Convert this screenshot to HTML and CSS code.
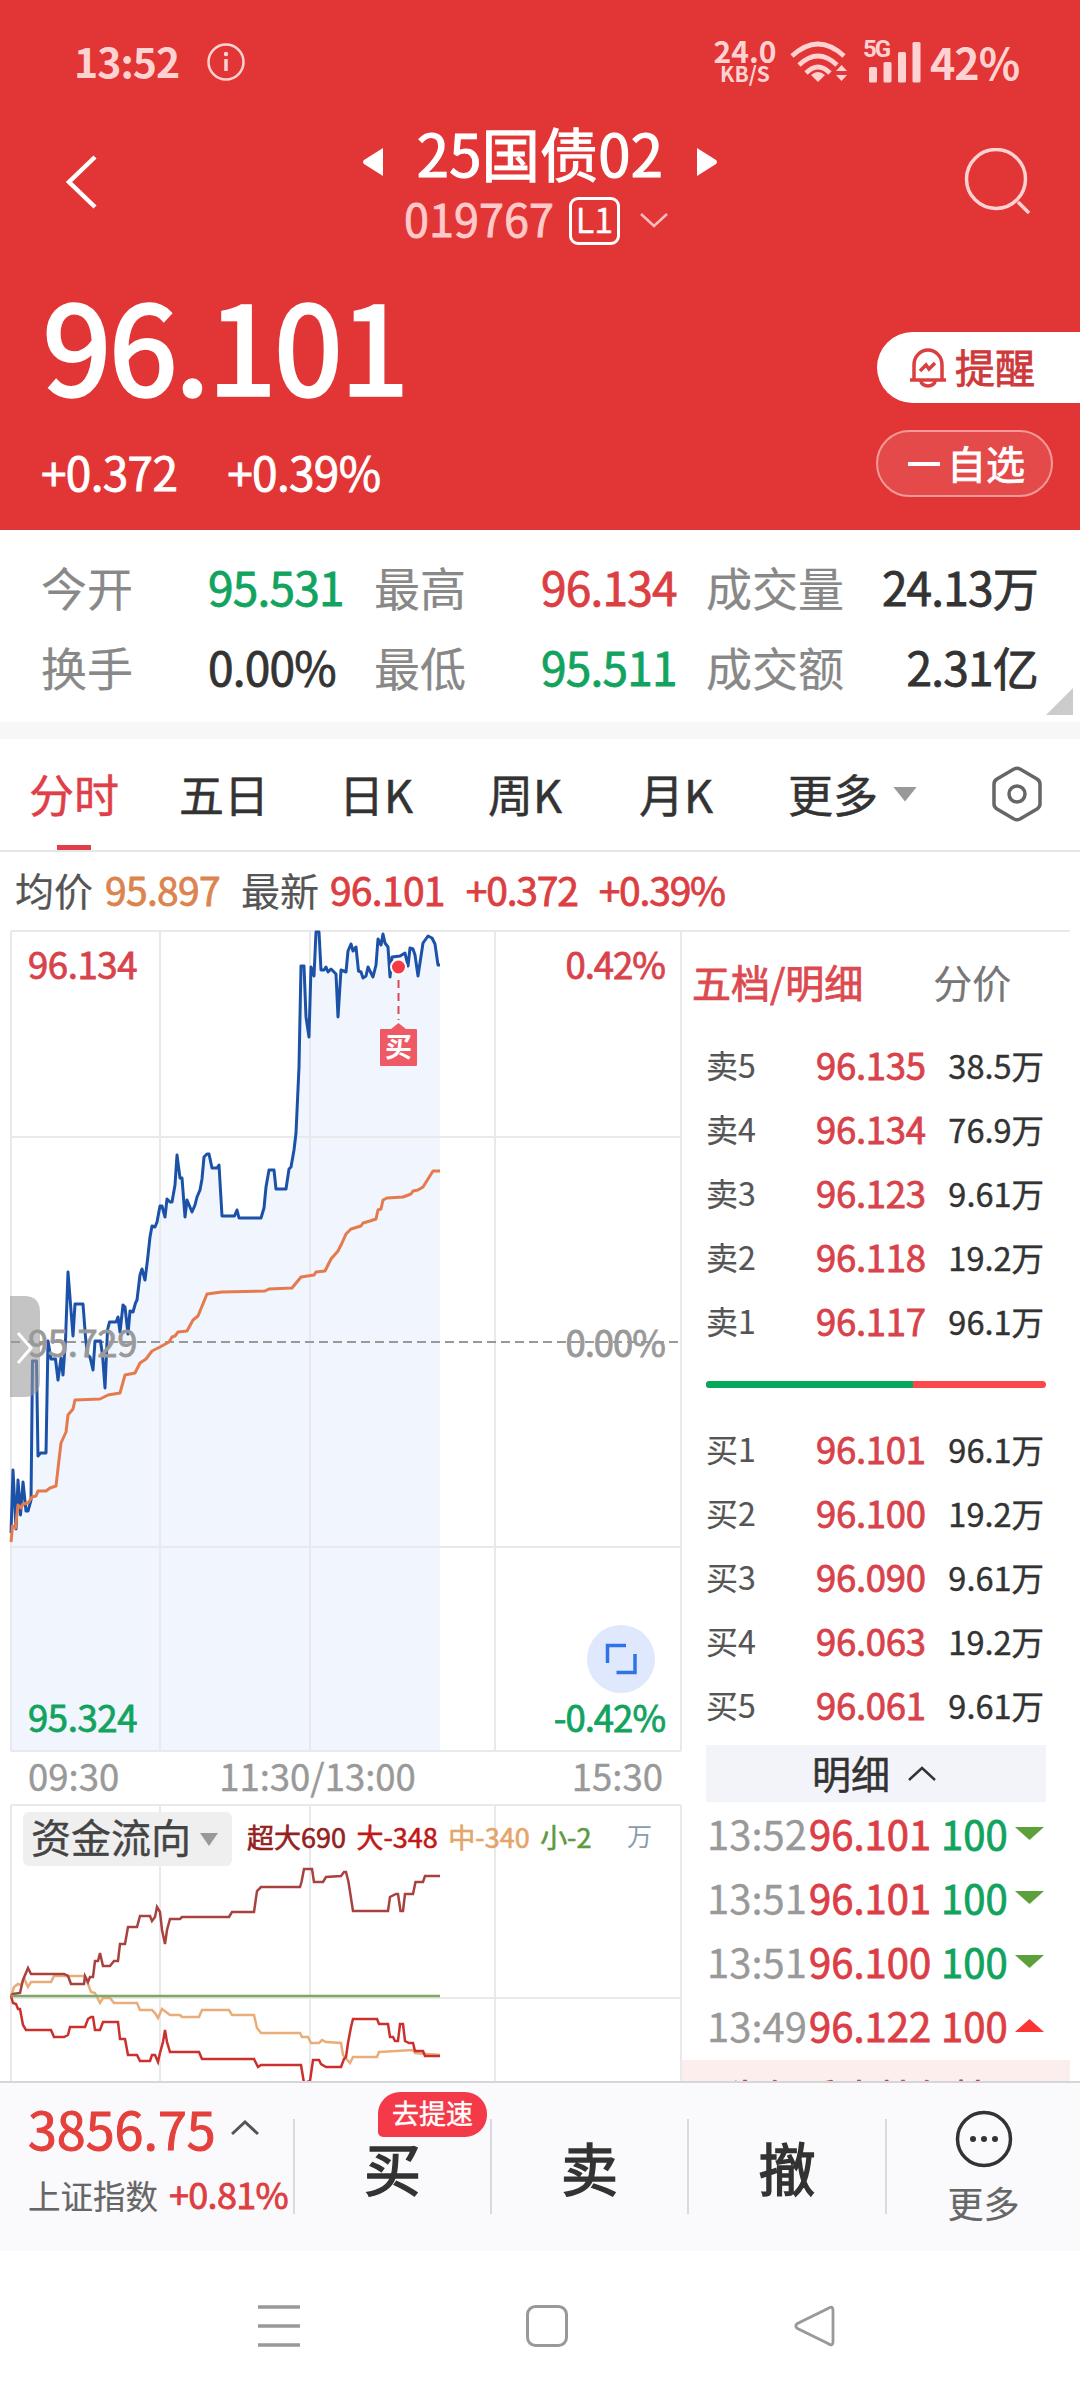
FILE: index.html
```html
<!DOCTYPE html>
<html lang="zh-CN">
<head>
    <meta charset="UTF-8">
    <meta name="viewport" content="width=device-width, initial-scale=1.0">
    <title>25国债02 019767</title>
    <link rel="stylesheet" href="styles.css">
</head>
<body>
    <header class="header">
        <div class="status">
            <span class="clock">13:52</span>
            <svg class="info-icon" width="38" height="38" viewBox="0 0 38 38">
                <circle cx="19" cy="19" r="17.5" fill="none" stroke="#ffd2d2" stroke-width="2.5"/>
                <path d="M19 16V28" stroke="#ffd2d2" stroke-width="3.5"/>
                <circle cx="19" cy="11" r="2.2" fill="#ffd2d2"/>
            </svg>
            <div class="net-speed">
                <span class="speed">24.0</span>
                <span class="unit">KB/S</span>
            </div>
            <svg width="58" height="42" viewBox="791 41 58 42" fill="none" stroke="#ffd2d2" stroke-width="4.6">
                <path d="M793 56Q819 32 845 56"/>
                <path d="M800 65Q819 47 838 65"/>
                <path d="M807 73Q819 61 831 73"/>
                <path d="M812 75Q819 69 826 75L819 82Z" fill="#ffd2d2" stroke="none"/>
                <path d="M837 71L842.500 65L848 71ZM837 75L842.500 81L848 75Z" fill="#ffd2d2" stroke="none"/>
            </svg>
            <div class="signal">
                <span class="net-type">5G</span>
                <svg width="52" height="42" viewBox="870 41 52 42" fill="#ffd2d2">
                    <rect x="870" y="67" width="8" height="15.500" rx="1.500"/>
                    <rect x="884.500" y="62" width="8" height="20.500" rx="1.500"/>
                    <rect x="899" y="52" width="8" height="30.500" rx="1.500"/>
                    <rect x="913.500" y="42" width="8" height="40.500" rx="1.500"/>
                </svg>
            </div>
            <span class="battery">42%</span>
        </div>

        <div class="titlebar">
            <svg class="back" width="34" height="56" viewBox="0 0 34 56">
                <path d="M30 3L4 28L30 53" fill="none" stroke="#fff" stroke-width="4.500"/>
            </svg>
            <div class="title-center">
                <div class="title-line">
                    <svg width="22" height="30" viewBox="0 0 22 30"><path d="M20 1V29L1 17Q-1 15 1 13Z" fill="#fff"/></svg>
                    <h1 class="name">25国债02</h1>
                    <svg width="22" height="30" viewBox="0 0 22 30"><path d="M2 1V29L21 17Q23 15 21 13Z" fill="#fff"/></svg>
                </div>
                <div class="code-line">
                    <span class="code">019767</span>
                    <span class="level">L1</span>
                    <svg class="code-arrow" width="28" height="16" viewBox="0 0 28 16"><path d="M1 1L14 13L27 1" fill="none" stroke="#f9bcbc" stroke-width="2.500"/></svg>
                </div>
            </div>
            <svg class="search" width="68" height="68" viewBox="0 0 68 68" fill="none" stroke="#ffd2d2" stroke-width="3.500">
                <circle cx="32" cy="31" r="29.500"/>
                <path d="M54 54L65 65"/>
            </svg>
        </div>

        <div class="quote">
            <div class="quote-left">
                <div class="price">96.101</div>
                <div class="change"><span>+0.372</span><span>+0.39%</span></div>
            </div>
            <div class="quote-right">
                <div class="remind">
                    <svg width="38" height="40" viewBox="0 0 38 40" fill="none" stroke="#d9403f" stroke-width="3.500">
                        <path d="M5 31V17A14 15 0 0 1 33 17V31"/>
                        <path d="M1 32H37"/>
                        <path d="M12 33A7 5 0 0 0 26 33"/>
                        <path d="M11 23L17 17L20 21L26 15"/>
                    </svg>
                    <span>提醒</span>
                </div>
                <div class="favorite"><i class="minus"></i><span>自选</span></div>
            </div>
        </div>
    </header>

    <section class="stats">
        <span class="stat-label">今开</span><span class="stat-value green">95.531</span>
        <span class="stat-label">最高</span><span class="stat-value red">96.134</span>
        <span class="stat-label">成交量</span><span class="stat-value right">24.13万</span>
        <span class="stat-label">换手</span><span class="stat-value">0.00%</span>
        <span class="stat-label">最低</span><span class="stat-value green">95.511</span>
        <span class="stat-label">成交额</span><span class="stat-value right">2.31亿</span>
        <i class="corner"></i>
    </section>

    <nav class="tabs">
        <span class="tab active">分时</span>
        <span class="tab">五日</span>
        <span class="tab">日K</span>
        <span class="tab">周K</span>
        <span class="tab">月K</span>
        <span class="tab">更多<i class="caret"></i></span>
        <svg class="settings" width="50" height="56" viewBox="0 0 50 56" fill="none" stroke="#666" stroke-width="3.500">
            <path d="M22 3Q25 1.500 28 3L45 13Q48 15 48 18V38Q48 41 45 43L28 53Q25 54.500 22 53L5 43Q2 41 2 38V18Q2 15 5 13Z"/>
            <circle cx="25" cy="28" r="8"/>
        </svg>
    </nav>

    <div class="summary">
        <span class="avg-label">均价</span><span class="avg">95.897</span>
        <span class="last-label">最新</span><span class="last">96.101</span>
        <span class="diff">+0.372</span><span class="diff">+0.39%</span>
    </div>

    <main class="main">
        <div class="charts">
            <svg class="price-chart" width="684" height="823" viewBox="0 930 684 823">
                <path class="area" d="M11 1533L13 1470 16 1529 18 1480 20.500 1515 23 1482 26 1511 28 1511 31 1500 32.500 1361 36.500 1361 38 1456 40.500 1453 46 1453 48 1341 51 1359 55.500 1359 58 1380 61 1358 63 1375 65.500 1340 68 1272 73 1336 75 1304 83 1304 85.500 1337 87.500 1355 90 1357 93 1370 95 1341 100.500 1341 102.500 1355 105 1388 107.500 1330 109.500 1322 116 1322 118 1317 120 1332 123 1305 125 1307 128 1334 130 1311 133 1312 135.500 1303 137 1300 140 1275 142 1269 145 1280 147.500 1260 150 1237 152 1226 155 1227 157 1222 160 1206 162 1206 165 1217 167 1199 170 1202 172 1202 175 1185 177 1155 180 1178 182 1178 185 1217 187 1200 192 1212 195 1205 197 1197 200 1190 202 1179 204 1157 207 1154 209 1154 212 1168 217 1168 219 1165 222 1216 234.500 1216 237 1210 239 1218 261 1218 264 1208 266 1187 269 1170 274 1170 276 1189 286 1189 289 1169 291 1167 294 1150 296 1133 299 1067 301 966 304 966 306 1017 309 1037 311 967 314 976 316 932 319 932 321 970 324 970 326 967 328 972 331 969 336 974 338 1017 341 970 346 972 348 951 351 944 353 951 356 947 358.500 971 361 972 363 978 366 976 368 967 373 977 376 965 378 939 381 945 383 934 385 943 388 947 390 977 392 957 400 956 405 953 408 966 410 948 413 949 415 955 418 976 423 943 428 936 432 938 435 944 438 965 440 965V1750H11Z"/>
                <path class="grid" d="M11 931H684M11 1137H681M11 1547H681M11 1751H681M11 931V1751M160 931V1751M310 931V1751M495 931V1751M681 931V1751"/>
                <path class="prev-close" d="M11 1342H681"/>
                <path class="line-price" d="M11 1533L13 1470 16 1529 18 1480 20.500 1515 23 1482 26 1511 28 1511 31 1500 32.500 1361 36.500 1361 38 1456 40.500 1453 46 1453 48 1341 51 1359 55.500 1359 58 1380 61 1358 63 1375 65.500 1340 68 1272 73 1336 75 1304 83 1304 85.500 1337 87.500 1355 90 1357 93 1370 95 1341 100.500 1341 102.500 1355 105 1388 107.500 1330 109.500 1322 116 1322 118 1317 120 1332 123 1305 125 1307 128 1334 130 1311 133 1312 135.500 1303 137 1300 140 1275 142 1269 145 1280 147.500 1260 150 1237 152 1226 155 1227 157 1222 160 1206 162 1206 165 1217 167 1199 170 1202 172 1202 175 1185 177 1155 180 1178 182 1178 185 1217 187 1200 192 1212 195 1205 197 1197 200 1190 202 1179 204 1157 207 1154 209 1154 212 1168 217 1168 219 1165 222 1216 234.500 1216 237 1210 239 1218 261 1218 264 1208 266 1187 269 1170 274 1170 276 1189 286 1189 289 1169 291 1167 294 1150 296 1133 299 1067 301 966 304 966 306 1017 309 1037 311 967 314 976 316 932 319 932 321 970 324 970 326 967 328 972 331 969 336 974 338 1017 341 970 346 972 348 951 351 944 353 951 356 947 358.500 971 361 972 363 978 366 976 368 967 373 977 376 965 378 939 381 945 383 934 385 943 388 947 390 977 392 957 400 956 405 953 408 966 410 948 413 949 415 955 418 976 423 943 428 936 432 938 435 944 438 965 440 965"/>
                <path class="line-avg" d="M11 1542L12.500 1526 15.500 1528 18 1505 21 1508 23 1504 28 1503 32 1497 36 1496 38 1491 46 1491 50 1488 56 1486 59 1460 61 1443 66 1432 68 1415 73 1409 75 1400 100 1399 108 1395 120 1393 125 1375 135 1373 140 1363 146 1359 152 1351 160 1347 169 1342 172 1337 175 1336 178 1332 187 1331 193 1320 198 1316 207 1294 222 1292 265 1291 269 1289 292 1288 301 1277 314 1275 316 1272 325 1271 331 1259 338 1251 342 1243 346 1234 351 1229 361 1226 363 1223 370 1221 376 1219 378 1210 381 1209 383 1200 387 1198 403 1197 411 1194 413 1191 418 1190 423 1187 433 1171 440 1171"/>
                <text class="axis red-text" x="28" y="979">96.134</text>
                <text class="axis red-text end" x="665" y="979">0.42%</text>
                <text class="axis gray-text" x="28" y="1357">95.729</text>
                <text class="axis gray-text end" x="665" y="1357">0.00%</text>
                <text class="axis green-text" x="28" y="1732">95.324</text>
                <text class="axis green-text end" x="665" y="1732">-0.42%</text>
                <!-- buy marker -->
                <path d="M398.500 980V1020" stroke="#d84a55" stroke-width="2" stroke-dasharray="8 5"/>
                <circle cx="398.500" cy="967" r="7.500" fill="#f53a45" stroke="#fff" stroke-width="2"/>
                <path d="M381 1029H391L398.500 1023L406 1029H416Q417 1029 417 1030V1065Q417 1066 416 1066H381Q380 1066 380 1065V1030Q380 1029 381 1029Z" fill="#ef5966"/>
                <text class="flag" x="398.500" y="1057">买</text>
                <!-- drawer handle -->
                <path d="M10 1296H24Q40 1296 40 1312V1381Q40 1397 24 1397H10Z" fill="#999" fill-opacity=".58"/>
                <path d="M18 1333L31 1348L18 1363" fill="none" stroke="#fff" stroke-width="3"/>
                <!-- fullscreen button -->
                <circle cx="621" cy="1659" r="34" fill="#dfe8fc"/>
                <path d="M607.500 1663V1645.500H626M635 1654V1672.500H616.500" fill="none" stroke="#2f74e6" stroke-width="3.500"/>
            </svg>

            <div class="time-axis"><span>09:30</span><span class="noon">11:30/13:00</span><span>15:30</span></div>

            <div class="flow">
                <svg class="flow-chart" width="684" height="277" viewBox="0 1804 684 277">
                    <path class="grid" d="M11 1805H681M11 1998H681M11 1805V2081M160 1805V2081M310 1805V2081M495 1805V2081M681 1805V2081"/>
                    <path class="flow-line mid" d="M11 1996L14 1987 18 1984 21 1985 24 1978 28 1987 31 1982 51 1982 54 1976 84 1976 88 1984 91 1992 95 1993 100 2003 103 1998 110 1998 114 2003 137 2003 140 2010 152 2010 155 2013 158 2018 162 2009 170 2015 180 2015 182 2017 199 2017 202 2010 229 2010 232 2015 254 2015 257 2028 261 2033 300 2033 302 2037 308 2037 311 2043 319 2043 322 2040 326 2042 341 2043 343 2055 350 2063 353 2057 377 2057 379 2052 413 2050 415 2053 427 2054 440 2055"/>
                    <path class="flow-line large" d="M11 1996L13 2003 16 2004 18 2009 20 2009 23 2025 26 2030 51 2030 54 2037 64 2037 68 2035 70 2027 85 2027 88 2019 91 2017 93 2017 95 2030 100 2030 103 2022 118 2022 120 2039 125 2039 128 2055 137 2055 140 2061 150 2061 152 2055 155 2055 158 2062 160 2053 163 2042 165 2030 167 2042 170 2052 199 2052 202 2059 254 2059 258 2067 261 2065 301 2065 304 2083 310 2081 313 2060 319 2060 321 2064 326 2067 341 2067 344 2059 346 2057 348 2043 351 2027 353 2019 377 2019 379 2024 388 2024 390 2037 393 2037 395 2041 398 2041 400 2024 403 2024 405 2041 409 2043 413 2043 415 2051 423 2051 425 2056 440 2056"/>
                    <path class="flow-line super" d="M11 1996L13 1994 20 1993 23 1980 28 1968 31 1974 64 1974 68 1976 71 1984 84 1984 85 1976 88 1982 90 1977 93 1977 95 1961 98 1961 100 1953 103 1966 110 1966 114 1961 118 1961 120 1944 125 1944 128 1927 137 1927 140 1916 150 1916 152 1921 155 1917 157 1907 160 1912 162 1930 165 1944 167 1930 170 1919 180 1919 182 1917 229 1917 232 1912 254 1912 257 1891 261 1887 300 1887 301.500 1882 304 1869 312 1869 314 1882 323 1882 326 1877 341 1876 344 1872 346 1872 348.500 1882 353 1911 388 1911 390 1897 396 1894 398 1894 400.500 1911 403 1911 405 1894 413 1894 415.500 1882 423 1882 425 1876 440 1876"/>
                    <path class="flow-line small" d="M11 1996H440"/>
                </svg>
                <div class="flow-head">
                    <span class="flow-select">资金流向<i class="caret small-caret"></i></span>
                    <div class="legend">
                        <span class="lg-super">超大690</span>
                        <span class="lg-large">大-348</span>
                        <span class="lg-mid">中-340</span>
                        <span class="lg-small">小-2</span>
                        <span class="lg-unit">万</span>
                    </div>
                </div>
            </div>
        </div>

        <aside class="book">
            <div class="book-tabs"><span class="book-tab active">五档/明细</span><span class="book-tab">分价</span></div>
            <div class="level-row"><span>卖5</span><b>96.135</b><em>38.5万</em></div>
            <div class="level-row"><span>卖4</span><b>96.134</b><em>76.9万</em></div>
            <div class="level-row"><span>卖3</span><b>96.123</b><em>9.61万</em></div>
            <div class="level-row"><span>卖2</span><b>96.118</b><em>19.2万</em></div>
            <div class="level-row"><span>卖1</span><b>96.117</b><em>96.1万</em></div>
            <div class="ratio"><i class="ratio-sell" style="width: 61%"></i></div>
            <div class="level-row"><span>买1</span><b>96.101</b><em>96.1万</em></div>
            <div class="level-row"><span>买2</span><b>96.100</b><em>19.2万</em></div>
            <div class="level-row"><span>买3</span><b>96.090</b><em>9.61万</em></div>
            <div class="level-row"><span>买4</span><b>96.063</b><em>19.2万</em></div>
            <div class="level-row"><span>买5</span><b>96.061</b><em>9.61万</em></div>
            <div class="detail-bar">
                <span>明细</span>
                <svg width="28" height="16" viewBox="0 0 28 16"><path d="M1 14L14 2L27 14" fill="none" stroke="#333" stroke-width="2.500"/></svg>
            </div>
            <div class="tick"><span>13:52</span><b>96.101</b><em class="green">100</em><i class="down"></i></div>
            <div class="tick"><span>13:51</span><b>96.101</b><em class="green">100</em><i class="down"></i></div>
            <div class="tick"><span>13:51</span><b>96.100</b><em class="green">100</em><i class="down"></i></div>
            <div class="tick"><span>13:49</span><b>96.122</b><em class="red">100</em><i class="up"></i></div>
            <div class="notice">先行委内档行情</div>
        </aside>
    </main>

    <footer class="trade-bar">
        <div class="index">
            <div class="index-value">3856.75
                <svg width="28" height="16" viewBox="0 0 28 16"><path d="M1 14L14 2L27 14" fill="none" stroke="#555" stroke-width="3"/></svg>
            </div>
            <div class="index-name">上证指数<span>+0.81%</span></div>
        </div>
        <div class="trade">买<span class="badge">去提速</span></div>
        <div class="trade">卖</div>
        <div class="trade">撤</div>
        <div class="more">
            <svg width="58" height="58" viewBox="0 0 58 58">
                <circle cx="29" cy="29" r="26.500" fill="none" stroke="#333" stroke-width="3.500"/>
                <circle cx="18" cy="29" r="3" fill="#333"/><circle cx="29" cy="29" r="3" fill="#333"/><circle cx="40" cy="29" r="3" fill="#333"/>
            </svg>
            <span>更多</span>
        </div>
    </footer>

    <div class="system-nav">
        <svg width="42" height="42" viewBox="0 0 42 42"><path d="M0 2H42M0 21H42M0 40H42" stroke="#999" stroke-width="3.500"/></svg>
        <svg width="42" height="42" viewBox="0 0 42 42"><rect x="1.500" y="1.500" width="39" height="39" rx="8" fill="none" stroke="#999" stroke-width="3"/></svg>
        <svg width="42" height="42" viewBox="0 0 42 42"><path d="M34 3.500Q39 0 39 6V36Q39 42 34 38.500L3.500 23.500Q0 21 3.500 18.500Z" fill="none" stroke="#999" stroke-width="2.800"/></svg>
    </div>
</body>
</html>
```

FILE: styles.css
```css
* {
    box-sizing: border-box;
}
body {
    margin: 0;
    width: 1080px;
    height: 2400px;
    overflow: hidden;
    background: #fff;
    color: #333;
    font-family: "Noto Sans CJK SC", sans-serif;
    -webkit-text-stroke: 0.8px currentColor;
}
svg {
    display: block;
    flex: none;
}
b, em, i {
    font-weight: normal;
    font-style: normal;
}
.red {
    color: #dc3e42;
}
.green {
    color: #12a35f;
}

/* header */
.header {
    height: 530px;
    background: #e23536;
    color: #fff;
}
.status {
    display: flex;
    align-items: center;
    height: 124px;
    padding-left: 74px;
    color: #ffd2d2;
    font-weight: bold;
    -webkit-text-stroke: 0;
}
.clock {
    width: 133px;
    font-size: 41px;
    line-height: 56px;
    margin-top: -5px;
    letter-spacing: -1px;
}
.net-speed {
    display: flex;
    flex-direction: column;
    align-items: center;
    width: 68px;
    margin-left: 466px;
    margin-right: 11px;
    padding-bottom: 2px;
}
.speed {
    font-size: 30px;
    height: 22px;
    line-height: 18px;
}
.unit {
    font-size: 21px;
    height: 18px;
    line-height: 20px;
}
.signal {
    display: flex;
    align-items: flex-start;
    width: 57px;
    margin-left: 15px;
}
.net-type {
    width: 6px;
    font-size: 24px;
    line-height: 17px;
    letter-spacing: -2px;
    font-family: Roboto, sans-serif;
}
.battery {
    margin-left: 10px;
    margin-top: -3px;
    font-size: 43px;
    letter-spacing: -1px;
}
.titlebar {
    display: flex;
    justify-content: space-between;
    height: 126px;
    padding: 0 48px 0 65px;
}
.back {
    margin-top: 30px;
}
.search {
    margin-top: 24px;
}
.title-center {
    display: flex;
    flex-direction: column;
    align-items: center;
    padding-left: 17px;
}
.title-line {
    display: flex;
    align-items: center;
    gap: 32px;
    height: 68px;
    padding-top: 8px;
}
.name {
    margin: -20px 0 0;
    font-size: 58px;
    font-weight: normal;
    line-height: 66px;
    letter-spacing: 0.3px;
    -webkit-text-stroke: 1.2px currentColor;
}
.code-line {
    display: flex;
    align-items: center;
    height: 58px;
    margin-left: -8px;
}
.code {
    margin-top: -6px;
    font-size: 45px;
    line-height: 58px;
    letter-spacing: 0;
    color: #ffc9c9;
}
.level {
    width: 51px;
    height: 48px;
    margin-left: 15px;
    border: 3px solid #fff;
    border-radius: 9px;
    font-size: 34px;
    line-height: 37px;
    text-align: center;
    -webkit-text-stroke: 0.3px currentColor;
}
.code-arrow {
    margin-left: 20px;
}
.quote {
    display: flex;
    justify-content: space-between;
    height: 280px;
}
.quote-left {
    padding-left: 43px;
}
.price {
    height: 190px;
    font-size: 122px;
    line-height: 184px;
    letter-spacing: -1.4px;
    -webkit-text-stroke: 3.5px currentColor;
}
.change {
    display: flex;
    gap: 50px;
    margin-left: -2px;
    font-size: 46px;
    line-height: 62px;
    letter-spacing: -0.7px;
}
.quote-right {
    display: flex;
    flex-direction: column;
    align-items: flex-start;
    width: 204px;
    padding-top: 82px;
}
.remind {
    display: flex;
    align-items: center;
    gap: 8px;
    width: 203px;
    height: 71px;
    margin-left: 1px;
    padding-left: 32px;
    background: #fff;
    border-radius: 36px 0 0 36px;
    color: #ce3a3c;
    font-size: 40px;
}
.remind span {
    margin-top: -4px;
}
.favorite {
    display: flex;
    align-items: center;
    gap: 8px;
    width: 177px;
    height: 67px;
    margin-top: 27px;
    padding-left: 30px;
    border: 2px solid #f29a9a;
    border-radius: 34px;
    background: #e54a4b;
    font-size: 39px;
}
.favorite span {
    margin-top: -3px;
    margin-left: -1px;
}
.minus {
    width: 32px;
    height: 4px;
    background: #fff;
}

/* stats */
.stats {
    position: relative;
    display: grid;
    grid-template-columns: 167px 166px 167px 165px 155px 177px;
    grid-template-rows: 80px 80px;
    align-items: center;
    height: 209px;
    padding: 16px 42px 33px 41px;
    border-bottom: 17px solid #f7f7f7;
    font-size: 46px;
    line-height: 80px;
}
.stat-label {
    color: #888;
    -webkit-text-stroke: 0.2px currentColor;
}
.stat-value {
    letter-spacing: -0.8px;
}
.right {
    text-align: right;
}
.corner {
    position: absolute;
    right: 7px;
    bottom: 7px;
    width: 27px;
    height: 27px;
    background: #ccc;
    clip-path: polygon(100% 0, 100% 100%, 0 100%);
}

/* period tabs */
.tabs {
    display: grid;
    grid-template-columns: 150px 160px 149px 151px 149px 204px 50px;
    align-items: center;
    justify-items: start;
    height: 113px;
    padding-left: 29px;
    border-bottom: 2px solid #e6e6e6;
    font-size: 45px;
    line-height: 106px;
}
.tab {
    display: flex;
    align-items: center;
    height: 111px;
    padding-bottom: 1px;
    -webkit-text-stroke: 0.5px currentColor;
}
.tab.active {
    color: #e03e48;
    background: linear-gradient(#e03e48, #e03e48) center bottom / 34px 5px no-repeat;
}
.caret {
    width: 24px;
    height: 15px;
    margin-left: 15px;
    background: #999;
    clip-path: polygon(0 0, 100% 0, 50% 100%);
}
.settings {
    margin-bottom: 2px;
}
.summary {
    display: flex;
    height: 78px;
    padding-left: 15px;
    font-size: 39px;
    line-height: 74px;
    letter-spacing: -0.7px;
}
.avg-label, .last-label {
    color: #555;
    letter-spacing: 0;
    -webkit-text-stroke: 0.2px currentColor;
}
.avg {
    margin: 0 21px 0 12px;
    color: #dc8450;
}
.last {
    margin-left: 11px;
    color: #dc3e42;
}
.diff {
    margin-left: 21px;
    color: #dc3e42;
    letter-spacing: -1.2px;
}

/* charts */
.main {
    display: flex;
    height: 1151px;
    overflow: hidden;
}
.charts {
    width: 682px;
}
.grid {
    fill: none;
    stroke: #e9e9eb;
    stroke-width: 2;
}
.area {
    fill: #f0f5fe;
}
.prev-close {
    stroke: #999;
    stroke-width: 2;
    stroke-dasharray: 9 5;
}
.line-price, .line-avg {
    fill: none;
    stroke: #1c51a8;
    stroke-width: 3;
    stroke-linejoin: round;
}
.line-avg {
    stroke: #e57b4c;
}
.axis {
    font-size: 36.500px;
    letter-spacing: -0.4px;
    stroke-width: 0.8px;
}
.end {
    text-anchor: end;
    letter-spacing: -1px;
}
.red-text {
    fill: #d8434b;
    stroke: #d8434b;
}
.gray-text {
    fill: #999;
    stroke: #999;
}
.green-text {
    fill: #12a35f;
    stroke: #12a35f;
}
.flag {
    fill: #fff;
    font-size: 27px;
    font-weight: bold;
    text-anchor: middle;
    -webkit-text-stroke: 0;
}
.time-axis {
    display: flex;
    justify-content: space-between;
    height: 51px;
    padding: 0 19px 0 28px;
    color: #999;
    font-size: 36.500px;
    line-height: 46px;
    -webkit-text-stroke: 0.4px currentColor;
}
.noon {
    margin-right: 56px;
}
.flow {
    display: grid;
}
.flow-chart, .flow-head {
    grid-area: 1 / 1;
}
.flow-line {
    fill: none;
    stroke-width: 2.500;
}
.super {
    stroke: #a8423e;
}
.large {
    stroke: #cb302e;
}
.mid {
    stroke: #e8ad78;
}
.small {
    stroke: #7fa864;
}
.flow-head {
    display: flex;
    align-items: flex-start;
    padding: 8px 0 0 23px;
}
.flow-select {
    display: flex;
    align-items: center;
    width: 209px;
    height: 54px;
    padding: 0 0 6px 8px;
    background: #efefef;
    border-radius: 6px;
    color: #444;
    font-size: 40px;
    line-height: 48px;
    -webkit-text-stroke: 0.4px currentColor;
}
.small-caret {
    width: 18px;
    height: 13px;
    margin: 7px 0 0 9px;
}
.legend {
    display: flex;
    gap: 10.500px;
    padding-left: 15px;
    font-size: 27px;
    line-height: 50px;
    -webkit-text-stroke: 0.6px currentColor;
}
.lg-super {
    color: #94211e;
}
.lg-large {
    color: #c11815;
}
.lg-mid {
    color: #e5a468;
}
.lg-small {
    color: #5c9a3c;
}
.lg-unit {
    margin-left: 25px;
    color: #8b9cab;
    font-size: 25px;
    line-height: 46px;
    -webkit-text-stroke: 0;
}

/* order book */
.book {
    width: 388px;
    border-top: 2px solid #e9e9eb;
}
.book-tabs {
    display: flex;
    gap: 70px;
    height: 102px;
    padding-left: 10px;
    font-size: 39px;
    line-height: 99px;
    color: #777;
}
.book-tab {
    -webkit-text-stroke: 0.2px currentColor;
}
.book-tab.active {
    color: #dc4a50;
    -webkit-text-stroke: 0.8px currentColor;
}
.level-row {
    display: grid;
    grid-template-columns: 110px 112px 116px;
    height: 64px;
    padding-left: 24px;
    line-height: 61px;
}
.level-row span {
    color: #555;
    font-size: 32px;
    -webkit-text-stroke: 0.2px currentColor;
}
.level-row b {
    color: #d8434b;
    font-size: 36.500px;
    letter-spacing: -0.3px;
}
.level-row em {
    font-size: 32.500px;
    text-align: right;
    -webkit-text-stroke: 0.4px currentColor;
}
.ratio {
    height: 7px;
    margin: 27px 24px 30px 24px;
    border-radius: 4px;
    background: #fb484c;
    overflow: hidden;
}
.ratio-sell {
    display: block;
    height: 100%;
    background: #06a85c;
}
.detail-bar {
    display: flex;
    align-items: center;
    justify-content: center;
    gap: 18px;
    height: 57px;
    margin: 7px 24px 2px 24px;
    padding-right: 4px;
    background: #f3f4f9;
    font-size: 39px;
    line-height: 50px;
    -webkit-text-stroke: 0.5px currentColor;
}
.detail-bar span {
    margin-top: -4px;
}
.tick {
    display: grid;
    grid-template-columns: 102px 132px 74px 30px;
    height: 64px;
    padding-left: 25px;
    font-size: 40px;
    line-height: 58px;
}
.tick span {
    color: #999;
    -webkit-text-stroke: 0.3px currentColor;
}
.tick b {
    color: #dc3e46;
}
.down, .up {
    width: 29px;
    height: 13px;
    margin-top: 23px;
    background: #5c9f3b;
    clip-path: polygon(0 0, 100% 0, 50% 100%);
}
.up {
    background: #fb3434;
    clip-path: polygon(50% 0, 100% 100%, 0 100%);
}
.notice {
    height: 40px;
    padding-left: 44px;
    background: #fdeeee;
    color: #b04a4a;
    font-size: 38px;
    line-height: 72px;
}

/* trade bar */
.trade-bar {
    display: grid;
    grid-template-columns: 293px 197px 197px 198px 195px;
    height: 170px;
    border-top: 2px solid #d6d6da;
    background: #fafafc;
}
.index {
    padding: 11px 0 0 28px;
    white-space: nowrap;
}
.index-value {
    display: flex;
    align-items: center;
    gap: 15px;
    height: 72px;
    padding-bottom: 4px;
    color: #e4403c;
    font-size: 52px;
    line-height: 64px;
    -webkit-text-stroke: 1px currentColor;
}
.index-name {
    font-size: 32.500px;
    line-height: 54px;
    color: #666;
    -webkit-text-stroke: 0.2px currentColor;
}
.index-name span {
    margin-left: 11px;
    color: #dc3e42;
    font-size: 36px;
    letter-spacing: -0.7px;
    -webkit-text-stroke: 0.8px currentColor;
}
.trade {
    position: relative;
    height: 95px;
    margin-top: 36px;
    border-left: 2px solid #dadadd;
    font-size: 57px;
    line-height: 95px;
    text-align: center;
    -webkit-text-stroke: 1.5px currentColor;
}
.badge {
    position: absolute;
    left: 83px;
    top: -27px;
    width: 109px;
    height: 45px;
    border-radius: 22px 22px 22px 5px;
    background: #f43a48;
    color: #fff;
    font-size: 27px;
    line-height: 41px;
    -webkit-text-stroke: 0.4px currentColor;
}
.more {
    display: flex;
    flex-direction: column;
    align-items: center;
    height: 95px;
    margin-top: 36px;
    border-left: 2px solid #dadadd;
    color: #666;
    font-size: 36px;
    line-height: 68px;
    -webkit-text-stroke: 0.2px currentColor;
}
.more svg {
    margin-top: -9px;
}

/* android navigation */
.system-nav {
    display: flex;
    align-items: center;
    justify-content: space-between;
    height: 149px;
    padding: 0 244px 0 258px;
}
```
